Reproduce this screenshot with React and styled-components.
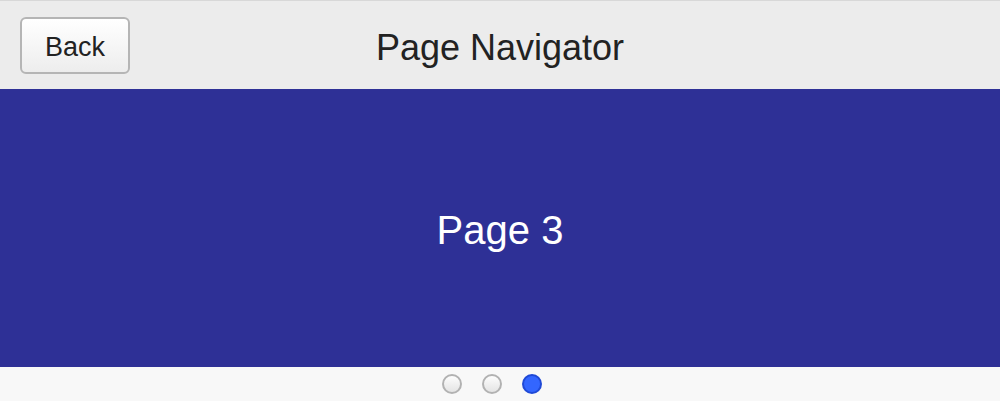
import React, { useState } from 'react';
import styled, { createGlobalStyle } from 'styled-components';

const GlobalStyle = createGlobalStyle`
  html, body {
    margin: 0;
    padding: 0;
    height: 100%;
  }
  body {
    font-family: "Liberation Sans", Arial, sans-serif;
    background: #f8f8f8;
  }
  #root {
    height: 100%;
  }
`;

const Screen = styled.div`
  display: flex;
  flex-direction: column;
  height: 401px;
  width: 1000px;
`;

const Header = styled.header`
  position: relative;
  display: flex;
  align-items: center;
  justify-content: center;
  height: 89px;
  box-sizing: border-box;
  padding-top: 5px;
  background: #ececec;
  border-top: 1px solid #d8d8d8;
`;

const BackButton = styled.button`
  position: absolute;
  left: 20px;
  top: 16px;
  width: 110px;
  height: 57px;
  box-sizing: border-box;
  border: 2px solid #b5b5b5;
  border-radius: 6px;
  background: linear-gradient(#ffffff, #ededed);
  font-family: "Liberation Sans", Arial, sans-serif;
  font-size: 27px;
  color: #222;
  cursor: pointer;
  padding: 3px 0 0;
`;

const Title = styled.h1`
  margin: 0;
  font-weight: normal;
  font-size: 36px;
  color: #222;
`;

const Stage = styled.main`
  flex: 1;
  display: flex;
  align-items: center;
  justify-content: center;
  background: #2e3096;
  color: #fff;
  font-size: 40px;
  padding-top: 5px;
`;

const Pager = styled.nav`
  display: flex;
  align-items: center;
  justify-content: center;
  gap: 20px;
  height: 34px;
  padding-right: 16px;
  background: #f8f8f8;
`;

const Dot = styled.span`
  width: 20px;
  height: 20px;
  box-sizing: border-box;
  border-radius: 50%;
  border: 2px solid ${p => (p.$active ? '#1f49d6' : '#b2b2b2')};
  background: ${p => (p.$active ? '#3366ff' : 'linear-gradient(#fdfdfd, #e4e4e4)')};
`;

const pages = ['Page 1', 'Page 2', 'Page 3'];

export default function App() {
  const [current, setCurrent] = useState(2);
  return (
    <>
      <GlobalStyle />
      <Screen>
        <Header>
          <BackButton onClick={() => setCurrent(Math.max(0, current - 1))}>Back</BackButton>
          <Title>Page Navigator</Title>
        </Header>
        <Stage>{pages[current]}</Stage>
        <Pager>
          {pages.map((p, i) => (
            <Dot key={p} $active={i === current} onClick={() => setCurrent(i)} />
          ))}
        </Pager>
      </Screen>
    </>
  );
}
